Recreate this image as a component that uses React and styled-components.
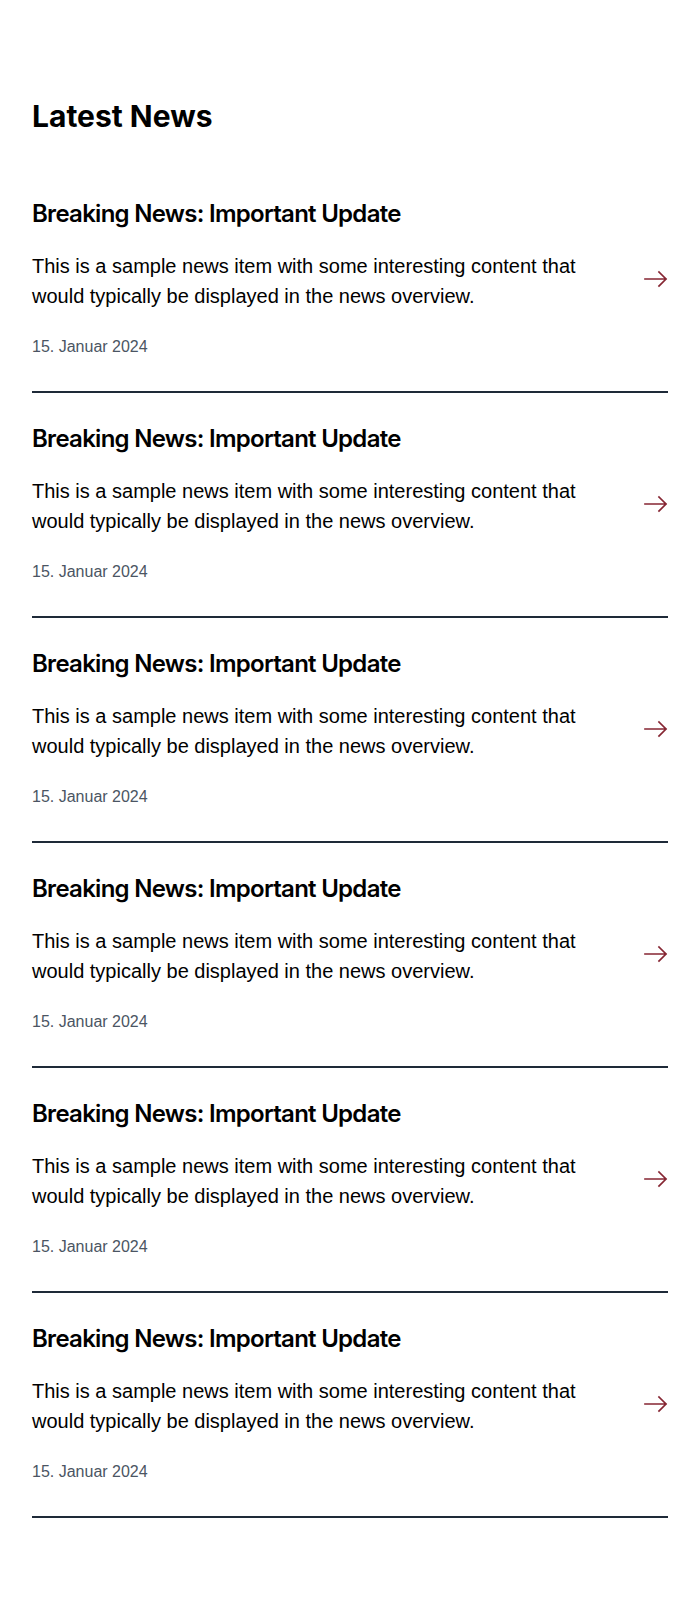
import styled, { createGlobalStyle } from 'styled-components';

const GlobalStyle = createGlobalStyle`
  body {
    margin: 0;
    background: #ffffff;
    font-family: "Liberation Sans", Arial, sans-serif;
  }
`;

const newsItems = Array.from({ length: 6 }, (_, i) => ({
  id: i,
  title: 'Breaking News: Important Update',
  text: 'This is a sample news item with some interesting content that would typically be displayed in the news overview.',
  date: '15. Januar 2024',
}));

function ArrowIcon() {
  return (
    <svg width="24" height="24" viewBox="0 0 24 24" fill="none">
      <path
        d="M1 12h21M15 5l7 7-7 7"
        stroke="currentColor"
        strokeWidth="1.7"
        strokeLinecap="square"
      />
    </svg>
  );
}

function NewsItem({ title, text, date }) {
  return (
    <Item>
      <ItemTitle>{title}</ItemTitle>
      <Row>
        <Text>{text}</Text>
        <ArrowLink href="#" aria-label="Read more">
          <ArrowIcon />
        </ArrowLink>
      </Row>
      <DateLine>{date}</DateLine>
    </Item>
  );
}

export default function App() {
  return (
    <>
      <GlobalStyle />
      <Section>
        <Title>Latest News</Title>
        <List>
          {newsItems.map((item) => (
            <NewsItem key={item.id} {...item} />
          ))}
        </List>
      </Section>
    </>
  );
}

const Section = styled.section`
  padding: 98px 32px 96px 32px;
`;

const Title = styled.h2`
  margin: 0 0 34px 0;
  font-family: Inter, "Noto Sans", sans-serif;
  font-size: 30px;
  line-height: 36px;
  font-weight: 700;
  letter-spacing: 0;
  color: #000;
`;

const List = styled.div`
  display: flex;
  flex-direction: column;
`;

const Item = styled.article`
  padding: 33px 0 32px 0;
  border-bottom: 2px solid #1e2a38;
`;

const ItemTitle = styled.h3`
  margin: 0 0 24px 0;
  font-family: Inter, "Noto Sans", sans-serif;
  font-size: 24px;
  line-height: 26px;
  font-weight: 600;
  letter-spacing: -0.03em;
  color: #000;
`;

const Row = styled.div`
  display: flex;
  align-items: center;
  justify-content: space-between;
  gap: 32px;
`;

const Text = styled.p`
  margin: 0;
  flex: 1;
  font-size: 20px;
  line-height: 1.5;
  color: #000;
`;

const ArrowLink = styled.a`
  display: flex;
  flex-shrink: 0;
  margin-bottom: 5px;
  color: #862633;
`;

const DateLine = styled.div`
  margin-top: 24px;
  font-size: 16px;
  line-height: 24px;
  color: #4b5563;
`;
